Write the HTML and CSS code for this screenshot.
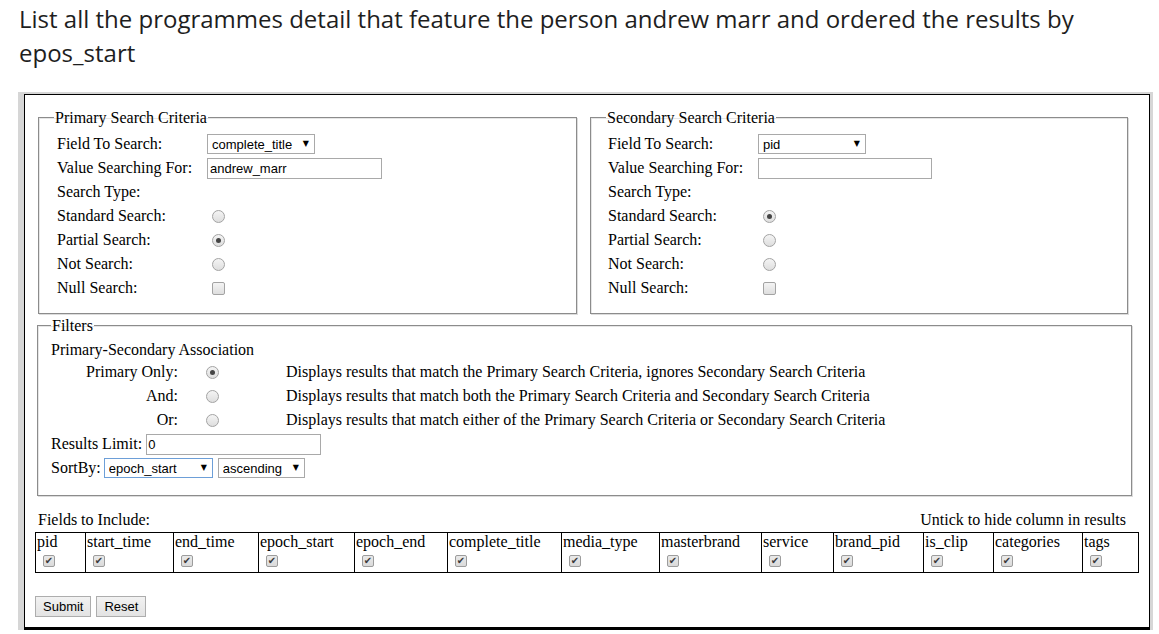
FILE: index.html
```html
<!DOCTYPE html>
<html>
<head>
<meta charset="utf-8">
<link rel="stylesheet" href="styles.css">
</head>
<body>
<h1 class="title">List all the programmes detail that feature the person andrew marr and ordered the results by epos_start</h1>
<div class="frame">
  <form class="panel">
    <div class="criteria">
      <fieldset class="box box-primary">
        <legend>Primary Search Criteria</legend>
        <div class="form-grid">
          <label>Field To Search:</label>
          <div class="sel sel-title"><select><option>complete_title</option></select></div>
          <label>Value Searching For:</label>
          <input class="text" type="text" value="andrew_marr">
          <label class="span2">Search Type:</label>
          <label>Standard Search:</label>
          <input class="radio" type="radio" name="p">
          <label>Partial Search:</label>
          <input class="radio" type="radio" name="p" checked>
          <label>Not Search:</label>
          <input class="radio" type="radio" name="p">
          <label>Null Search:</label>
          <input class="check" type="checkbox">
        </div>
      </fieldset>
      <fieldset class="box box-secondary">
        <legend>Secondary Search Criteria</legend>
        <div class="form-grid">
          <label>Field To Search:</label>
          <div class="sel sel-pid"><select><option>pid</option></select></div>
          <label>Value Searching For:</label>
          <input class="text" type="text" value="">
          <label class="span2">Search Type:</label>
          <label>Standard Search:</label>
          <input class="radio" type="radio" name="s" checked>
          <label>Partial Search:</label>
          <input class="radio" type="radio" name="s">
          <label>Not Search:</label>
          <input class="radio" type="radio" name="s">
          <label>Null Search:</label>
          <input class="check" type="checkbox">
        </div>
      </fieldset>
    </div>
    <fieldset class="box box-filters">
      <legend>Filters</legend>
      <div class="assoc-head">Primary-Secondary Association</div>
      <div class="assoc-grid">
        <label class="assoc-label">Primary Only:</label>
        <input class="radio" type="radio" name="a" checked>
        <span>Displays results that match the Primary Search Criteria, ignores Secondary Search Criteria</span>
        <label class="assoc-label">And:</label>
        <input class="radio" type="radio" name="a">
        <span>Displays results that match both the Primary Search Criteria and Secondary Search Criteria</span>
        <label class="assoc-label">Or:</label>
        <input class="radio" type="radio" name="a">
        <span>Displays results that match either of the Primary Search Criteria or Secondary Search Criteria</span>
      </div>
      <div class="line">
        <label>Results Limit:</label>
        <input class="text text-limit" type="text" value="0">
      </div>
      <div class="line">
        <label>SortBy:</label>
        <div class="sel sel-sort focus"><select><option>epoch_start</option></select></div>
        <div class="sel sel-dir"><select><option>ascending</option></select></div>
      </div>
    </fieldset>
    <div class="fields-head">
      <span>Fields to Include:</span>
      <span>Untick to hide column in results</span>
    </div>
    <table class="fields">
      <colgroup>
        <col class="c1"><col class="c2"><col class="c3"><col class="c4"><col class="c5"><col class="c6"><col class="c7"><col class="c8"><col class="c9"><col class="c10"><col class="c11"><col class="c12"><col class="c13">
      </colgroup>
      <tr>
        <td>pid<input class="tick" type="checkbox" checked></td>
        <td>start_time<input class="tick" type="checkbox" checked></td>
        <td>end_time<input class="tick" type="checkbox" checked></td>
        <td>epoch_start<input class="tick" type="checkbox" checked></td>
        <td>epoch_end<input class="tick" type="checkbox" checked></td>
        <td>complete_title<input class="tick" type="checkbox" checked></td>
        <td>media_type<input class="tick" type="checkbox" checked></td>
        <td>masterbrand<input class="tick" type="checkbox" checked></td>
        <td>service<input class="tick" type="checkbox" checked></td>
        <td>brand_pid<input class="tick" type="checkbox" checked></td>
        <td>is_clip<input class="tick" type="checkbox" checked></td>
        <td>categories<input class="tick" type="checkbox" checked></td>
        <td>tags<input class="tick" type="checkbox" checked></td>
      </tr>
    </table>
    <div class="buttons">
      <button type="button" class="btn">Submit</button>
      <button type="button" class="btn">Reset</button>
    </div>
  </form>
</div>
</body>
</html>
```
FILE: styles.css
```css
html, body {
  margin: 0;
  padding: 0;
  background: #ffffff;
}

.title {
  margin: 2px 0 0 0;
  padding-left: 19px;
  font-family: "Open Sans", sans-serif;
  font-weight: 400;
  font-size: 24px;
  line-height: 34px;
  color: #1e1e1e;
  width: 1100px;
}

.frame {
  margin: 22px 0 0 18px;
  width: 1126px;
  padding: 2px 3px 0 6px;
  background: #d6d6d6;
}

.panel {
  background: #fff;
  border: 1px solid #000;
  border-bottom-width: 3px;
  padding: 14px 0 10px 0;
  font-family: "Liberation Serif", "Times New Roman", serif;
  font-size: 16px;
  color: #000;
}

.criteria {
  display: flex;
  gap: 13px;
  padding-left: 13px;
}

.box {
  margin: 0;
  border: 1px solid #8c8c8c;
  box-shadow: 1px 1px 0 #dcdcdc, inset 1px 1px 0 #e6e6e6;
  padding: 0;
  min-width: 0;
}

.box legend {
  padding: 0 1px;
  line-height: 17px;
}

.box-primary {
  width: 539px;
  box-sizing: border-box;
  padding: 6px 0 13px 18px;
}

.box-primary legend {
  margin-left: -3px;
}

.box-secondary {
  width: 538px;
  box-sizing: border-box;
  padding: 6px 0 13px 17px;
}

.box-secondary legend {
  margin-left: -2px;
}

.form-grid {
  display: grid;
  grid-template-columns: 150px 1fr;
  grid-auto-rows: 24px;
  align-items: center;
  justify-items: start;
}

.form-grid .span2 {
  grid-column: 1 / 3;
}

.box-filters {
  width: 1095px;
  box-sizing: border-box;
  margin: 3px 0 0 12px;
  padding: 6px 0 15px 13px;
}

.box-filters legend {
  margin-left: 0;
}

.assoc-head {
  height: 20px;
  line-height: 20px;
}

.assoc-grid {
  display: grid;
  grid-template-columns: 127px 108px 1fr;
  grid-auto-rows: 24px;
  align-items: center;
}

.assoc-label {
  text-align: right;
}

.assoc-grid .radio {
  margin-left: 28px;
}

.line {
  display: flex;
  align-items: center;
  height: 24px;
  gap: 3px;
}

.line .text-limit {
  margin-left: 1px;
}

/* controls */
.text {
  box-sizing: border-box;
  width: 175px;
  height: 21px;
  margin: 0;
  padding: 1px 2px;
  border: 1px solid #a9a9a9;
  font-family: "Liberation Sans", Arial, sans-serif;
  font-size: 13px;
  color: #000;
  outline: none;
}

.box-secondary .text {
  width: 174px;
}

.text-limit {
  width: 175px;
  padding-left: 1px;
}

.sel {
  position: relative;
  display: inline-block;
}

.sel select {
  -webkit-appearance: none;
  appearance: none;
  box-sizing: border-box;
  height: 20px;
  margin: 0;
  padding: 0 16px 0 4px;
  border: 1px solid #a9a9a9;
  border-radius: 0;
  background: #fff;
  font-family: "Liberation Sans", Arial, sans-serif;
  font-size: 13px;
  color: #000;
  outline: none;
}

.sel::after {
  content: "\25BC";
  position: absolute;
  right: 6px;
  top: 4px;
  font-family: "DejaVu Sans", sans-serif;
  font-size: 8px;
  line-height: 12px;
  color: #000;
  pointer-events: none;
}

.sel-title select,
.sel-pid select {
  width: 108px;
}

.sel-sort select {
  width: 109px;
}

.sel-dir select {
  width: 87px;
}

.sel-dir {
  margin-left: 2px;
}

.focus select {
  border-color: #6d9fd8;
}

.radio {
  -webkit-appearance: none;
  appearance: none;
  width: 13px;
  height: 13px;
  margin: 0 0 0 5px;
  border: 1px solid #a3a3a3;
  border-radius: 50%;
  background: linear-gradient(#f4f4f4, #dedede);
  position: relative;
  box-sizing: border-box;
}

.radio:checked::before {
  content: "";
  position: absolute;
  left: 3px;
  top: 3px;
  width: 5px;
  height: 5px;
  border-radius: 50%;
  background: #454545;
}

.check {
  -webkit-appearance: none;
  appearance: none;
  width: 13px;
  height: 13px;
  margin: 0 0 0 5px;
  border: 1px solid #a3a3a3;
  border-radius: 2px;
  background: linear-gradient(#f4f4f4, #dedede);
  box-sizing: border-box;
}

.tick {
  -webkit-appearance: none;
  appearance: none;
  display: block;
  position: relative;
  width: 12px;
  height: 12px;
  margin: 4px 0 0 6px;
  border: 1px solid #9c9c9c;
  border-radius: 2px;
  background: linear-gradient(#e9e9e9, #dadada);
  box-sizing: border-box;
}

.tick:checked::before {
  content: "\2714";
  position: absolute;
  left: 0;
  top: -1px;
  width: 10px;
  text-align: center;
  font-family: "DejaVu Sans", sans-serif;
  font-size: 10px;
  line-height: 12px;
  color: #3a3a3a;
}

/* fields table */
.fields-head {
  display: flex;
  justify-content: space-between;
  margin: 14px 0 0 13px;
  width: 1088px;
  height: 20px;
  line-height: 20px;
}

.fields {
  margin: 2px 0 0 10px;
  width: 1104px;
  table-layout: fixed;
  border-collapse: collapse;
  font-size: 16px;
}

.fields td {
  border: 1px solid #000;
  padding: 0 0 5px 1px;
  vertical-align: top;
  line-height: 18px;
  white-space: nowrap;
  overflow: hidden;
}

.fields .c1 { width: 50px; }
.fields .c2 { width: 88px; }
.fields .c3 { width: 85px; }
.fields .c4 { width: 96px; }
.fields .c5 { width: 93px; }
.fields .c6 { width: 114px; }
.fields .c7 { width: 98px; }
.fields .c8 { width: 102px; }
.fields .c9 { width: 72px; }
.fields .c10 { width: 90px; }
.fields .c11 { width: 70px; }
.fields .c12 { width: 89px; }
.fields .c13 { width: 56px; }

.buttons {
  display: flex;
  gap: 5px;
  margin: 23px 0 0 10px;
}

.btn {
  height: 21px;
  margin: 0;
  padding: 0 7px;
  border: 1px solid #adadad;
  border-radius: 0;
  background: linear-gradient(#f2f2f2, #e3e3e3);
  font-family: "Liberation Sans", Arial, sans-serif;
  font-size: 13px;
  color: #000;
}
```
